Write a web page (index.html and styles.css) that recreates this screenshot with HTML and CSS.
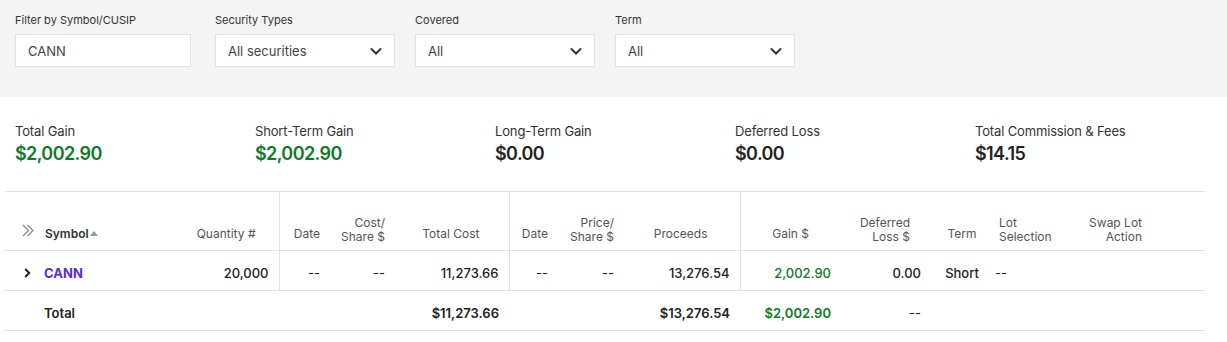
FILE: index.html
```html
<!DOCTYPE html>
<html lang="en">
<head>
    <meta charset="UTF-8">
    <meta name="viewport" content="width=device-width, initial-scale=1.0">
    <title>Realized Gain/Loss</title>
    <link rel="stylesheet" href="styles.css">
</head>
<body>
    <div class="filters">
        <div class="field field-text">
            <label>Filter by Symbol/CUSIP</label>
            <div class="box">CANN</div>
        </div>
        <div class="field">
            <label>Security Types</label>
            <div class="box select">All securities
                <svg class="chev" width="12" height="8" viewBox="0 0 12 8"><path d="M1 1.5l5 5 5-5" fill="none" stroke="#333" stroke-width="2"/></svg>
            </div>
        </div>
        <div class="field">
            <label>Covered</label>
            <div class="box select">All
                <svg class="chev" width="12" height="8" viewBox="0 0 12 8"><path d="M1 1.5l5 5 5-5" fill="none" stroke="#333" stroke-width="2"/></svg>
            </div>
        </div>
        <div class="field">
            <label>Term</label>
            <div class="box select">All
                <svg class="chev" width="12" height="8" viewBox="0 0 12 8"><path d="M1 1.5l5 5 5-5" fill="none" stroke="#333" stroke-width="2"/></svg>
            </div>
        </div>
    </div>

    <div class="summary">
        <div class="stat">
            <div class="stat-label">Total Gain</div>
            <div class="stat-value gain">$2,002.90</div>
        </div>
        <div class="stat">
            <div class="stat-label">Short-Term Gain</div>
            <div class="stat-value gain">$2,002.90</div>
        </div>
        <div class="stat">
            <div class="stat-label">Long-Term Gain</div>
            <div class="stat-value">$0.00</div>
        </div>
        <div class="stat">
            <div class="stat-label">Deferred Loss</div>
            <div class="stat-value">$0.00</div>
        </div>
        <div class="stat">
            <div class="stat-label">Total Commission &amp; Fees</div>
            <div class="stat-value">$14.15</div>
        </div>
    </div>

    <table class="lots">
        <colgroup>
            <col style="width:35px"><col style="width:100px"><col style="width:139px">
            <col style="width:51px"><col style="width:65px"><col style="width:114px">
            <col style="width:49px"><col style="width:66px"><col style="width:116px">
            <col style="width:101px"><col style="width:90px"><col style="width:58px">
            <col style="width:98px"><col style="width:65px"><col>
        </colgroup>
        <thead>
            <tr>
                <th class="icon-cell">
                    <svg width="12" height="13" viewBox="0 0 12 13"><path d="M1 1l5.5 5.5L1 12M5.5 1l5.5 5.5-5.5 5.5" fill="none" stroke="#888" stroke-width="1.2"/></svg>
                </th>
                <th class="left sym-head">Symbol<span class="sort"></span></th>
                <th class="num pad-13">Quantity #</th>
                <th class="num sep">Date</th>
                <th class="num two">Cost/<br>Share $</th>
                <th class="num pad-19">Total Cost</th>
                <th class="num sep">Date</th>
                <th class="num two">Price/<br>Share $</th>
                <th class="num pad-22">Proceeds</th>
                <th class="num sep pad-22">Gain $</th>
                <th class="num two pad-11">Deferred<br>Loss $</th>
                <th class="center term">Term</th>
                <th class="left two">Lot<br>Selection</th>
                <th class="num two">Swap Lot<br>Action</th>
                <th></th>
            </tr>
        </thead>
        <tbody>
            <tr>
                <td class="icon-cell">
                    <svg width="7" height="10" viewBox="0 0 7 10"><path d="M1.2 1l4 4-4 4" fill="none" stroke="#222" stroke-width="2"/></svg>
                </td>
                <td class="left symbol">CANN</td>
                <td class="num">20,000</td>
                <td class="num sep dash">--</td>
                <td class="num dash">--</td>
                <td class="num">11,273.66</td>
                <td class="num sep dash">--</td>
                <td class="num dash">--</td>
                <td class="num">13,276.54</td>
                <td class="num sep gain">2,002.90</td>
                <td class="num">0.00</td>
                <td class="center term">Short</td>
                <td class="left dash lot">--</td>
                <td></td>
                <td></td>
            </tr>
            <tr class="total">
                <td></td>
                <td class="left">Total</td>
                <td></td>
                <td></td>
                <td></td>
                <td class="num">$11,273.66</td>
                <td></td>
                <td></td>
                <td class="num">$13,276.54</td>
                <td class="num gain">$2,002.90</td>
                <td class="num dash">--</td>
                <td></td>
                <td></td>
                <td></td>
                <td></td>
            </tr>
        </tbody>
    </table>
</body>
</html>
```

FILE: styles.css
```css
body {
    margin: 0;
    font-family: Inter, "Liberation Sans", sans-serif;
    color: #222;
    background: white;
}
.filters {
    background: #f4f4f4;
    height: 97px;
    box-sizing: border-box;
    padding: 13px 15px 0;
    display: flex;
    gap: 20px;
}
.field label {
    display: block;
    font-size: 11px;
    color: #333;
    margin-bottom: 7px;
    line-height: 14px;
}
.box {
    width: 180px;
    height: 33px;
    box-sizing: border-box;
    background: white;
    border: 1px solid #e2e2e2;
    padding: 0 12px;
    font-size: 13px;
    color: #444;
    display: flex;
    align-items: center;
    justify-content: space-between;
}
.field-text {
    width: 180px;
}
.field-text .box {
    width: 176px;
}
.summary {
    display: flex;
    padding: 26px 15px 0;
    height: 94px;
    box-sizing: border-box;
}
.stat {
    width: 240px;
    flex-shrink: 0;
}
.stat-label {
    font-size: 13px;
    color: #333;
    line-height: 16px;
    letter-spacing: -0.15px;
}
.stat-value {
    font-size: 18px;
    font-weight: 600;
    color: #222;
    margin-top: 4px;
    letter-spacing: -0.6px;
}
.gain {
    color: #0e7a25;
}
.lots {
    margin-left: 5px;
    width: 1200px;
    border-collapse: collapse;
    table-layout: fixed;
    font-size: 13px;
}
.lots th {
    height: 59px;
    box-sizing: border-box;
    font-size: 12px;
    font-weight: normal;
    color: #555;
    vertical-align: bottom;
    padding: 0 10px 9px 0;
    line-height: 14px;
    border-top: 1px solid #e2e2e2;
    border-bottom: 1px solid #e2e2e2;
}
.lots th.two {
    padding-bottom: 6px;
}
.lots td {
    height: 40px;
    box-sizing: border-box;
    padding: 4px 10px 0 0;
    border-bottom: 1px solid #e2e2e2;
    font-weight: 500;
    color: #222;
}
.lots .sep {
    border-left: 1px solid #e2e2e2;
}
.num { text-align: right; }
.left { text-align: left; }
.center { text-align: center; }
.lots th.pad-11 { padding-right: 21px; }
.lots th.pad-13 { padding-right: 23px; }
.lots th.pad-19 { padding-right: 29px; }
.lots th.pad-22 { padding-right: 32px; }
.lots .term {
    padding-left: 4px;
    padding-right: 0;
}
.icon-cell {
    text-align: left;
    padding-left: 17px !important;
}
.lots th.icon-cell {
    padding-bottom: 10px;
}
.lots td.icon-cell {
    padding-left: 19px !important;
}
.sym-head {
    font-weight: 600 !important;
    color: #333 !important;
    padding-left: 5px !important;
}
.sort {
    display: inline-block;
    width: 0;
    height: 0;
    border-left: 4px solid transparent;
    border-right: 4px solid transparent;
    border-bottom: 5px solid #999;
    margin-left: 1px;
    vertical-align: 2px;
}
.lots td.left {
    padding-left: 4px;
}
.lots th.left.two {
    padding-left: 10px;
}
.lots td.lot {
    padding-left: 6px;
}
.symbol {
    color: #5a2dd7 !important;
    font-weight: 700 !important;
}
.dash {
    font-weight: normal !important;
}
tr.total td {
    font-weight: 600;
}
.lots td.gain {
    color: #0e7a25;
}
```
